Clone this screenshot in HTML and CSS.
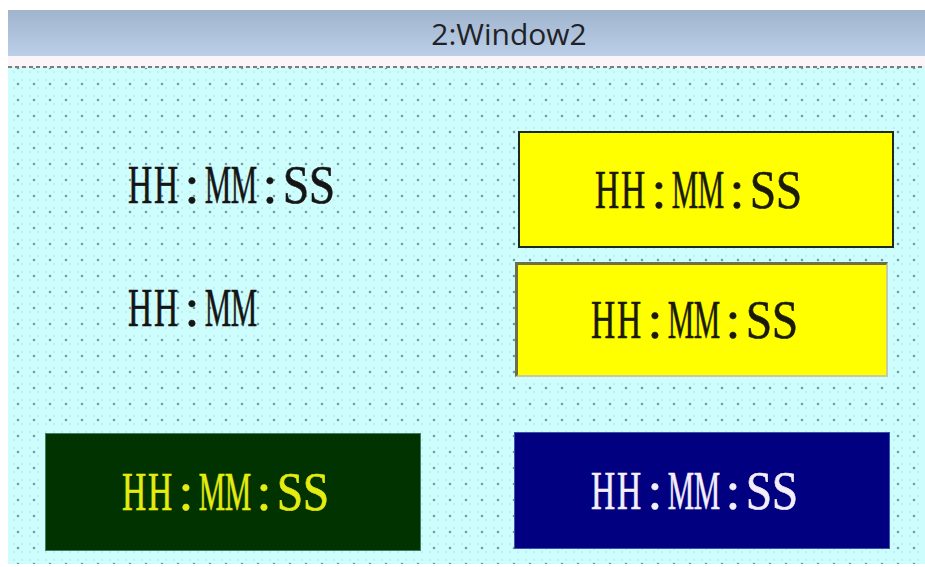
FILE: index.html
```html
<!DOCTYPE html>
<html lang="zh">
<head>
<meta charset="utf-8">
<title>2:Window2</title>
<link rel="stylesheet" href="styles.css">
</head>
<body>
<div class="window">
  <div class="titlebar">2:Window2</div>
  <div class="sep"></div>
  <div class="dash"></div>
  <div class="canvas">
    <div class="clock plain t1"><span class="ch h">H</span><span class="ch h">H</span><span class="ch c">:</span><span class="ch m">M</span><span class="ch m">M</span><span class="ch c">:</span><span class="ch s">S</span><span class="ch s">S</span></div>
    <div class="clock plain t2"><span class="ch h">H</span><span class="ch h">H</span><span class="ch c">:</span><span class="ch m">M</span><span class="ch m">M</span></div>
    <div class="clock box b1"><span class="ch h">H</span><span class="ch h">H</span><span class="ch c">:</span><span class="ch m">M</span><span class="ch m">M</span><span class="ch c">:</span><span class="ch s">S</span><span class="ch s">S</span></div>
    <div class="clock box b2"><span class="ch h">H</span><span class="ch h">H</span><span class="ch c">:</span><span class="ch m">M</span><span class="ch m">M</span><span class="ch c">:</span><span class="ch s">S</span><span class="ch s">S</span></div>
    <div class="clock box b3"><span class="ch h">H</span><span class="ch h">H</span><span class="ch c">:</span><span class="ch m">M</span><span class="ch m">M</span><span class="ch c">:</span><span class="ch s">S</span><span class="ch s">S</span></div>
    <div class="clock box b4"><span class="ch h">H</span><span class="ch h">H</span><span class="ch c">:</span><span class="ch m">M</span><span class="ch m">M</span><span class="ch c">:</span><span class="ch s">S</span><span class="ch s">S</span></div>
  </div>
</div>
</body>
</html>
```
FILE: styles.css
```css
html, body {
  margin: 0;
  padding: 0;
  background: #ffffff;
  overflow: hidden;
}
.window {
  padding: 10px 0 3px 8px;
  height: 567px;
  box-sizing: border-box;
  display: flex;
  flex-direction: column;
}
.titlebar {
  height: 46px;
  flex: none;
  display: flex;
  align-items: center;
  justify-content: center;
  padding-left: 85px;
  box-sizing: border-box;
  background: linear-gradient(to bottom, #a1b4ce 0%, #adc1db 50%, #bccfe9 100%);
  font-family: "Open Sans", "Noto Sans", sans-serif;
  font-size: 30px;
  color: #1f2226;
}
.sep {
  height: 10px;
  flex: none;
  background: #fbf5fa;
}
.dash {
  height: 2px;
  flex: none;
  background: repeating-linear-gradient(90deg, #7c7c7c 0 4px, #e8f4f4 4px 7px);
}
.canvas {
  position: relative;
  flex: 1;
  background-color: #cefdfd;
  background-image:
    radial-gradient(circle, #6f9e9e 0.9px, rgba(111,158,158,0) 1.7px),
    radial-gradient(circle, #b8e6e6 0.5px, rgba(184,230,230,0) 1px);
  background-size: 16px 16px, 8px 8px;
  background-position: 2px 8px, 2px 8px;
}
.clock {
  position: absolute;
  display: flex;
  align-items: center;
  font-family: "Liberation Serif", "Times New Roman", serif;
  font-size: 54px;
  line-height: 54px;
  white-space: nowrap;
  -webkit-text-stroke: 0.6px currentColor;
}
.ch {
  display: inline-flex;
  justify-content: center;
  width: 26px;
  flex: none;
}
.ch.h { transform: scaleX(0.62); }
.ch.m { transform: scaleX(0.55); }
.ch.s { transform: scaleX(0.88); }
.ch.c { transform: scaleX(1); }
.plain { color: #151515; }
.t1 { left: 119px; top: 90px; }
.t2 { left: 119px; top: 213px; }
.box {
  box-sizing: border-box;
  justify-content: center;
  padding-right: 16px;
}
.b1 {
  left: 510px; top: 63px; width: 376px; height: 117px;
  background: #ffff00;
  border: 2px solid #1b2a1b;
  color: #1a1a08;
}
.b2 {
  left: 507px; top: 194px; width: 373px; height: 115px;
  background: #ffff00;
  border-style: solid;
  border-width: 3px 2px 2px 3px;
  border-color: #6e6e48 #c9c9a4 #c9c9a4 #6e6e48;
  color: #1a1a08;
}
.b3 {
  left: 37px; top: 365px; width: 376px; height: 118px;
  background: #003300;
  border: 1px solid #3f8064;
  color: #e4ec10;
}
.b4 {
  left: 506px; top: 364px; width: 376px; height: 117px;
  background: #000080;
  border: 1px solid #3a52a8;
  color: #f4eef8;
}
```
